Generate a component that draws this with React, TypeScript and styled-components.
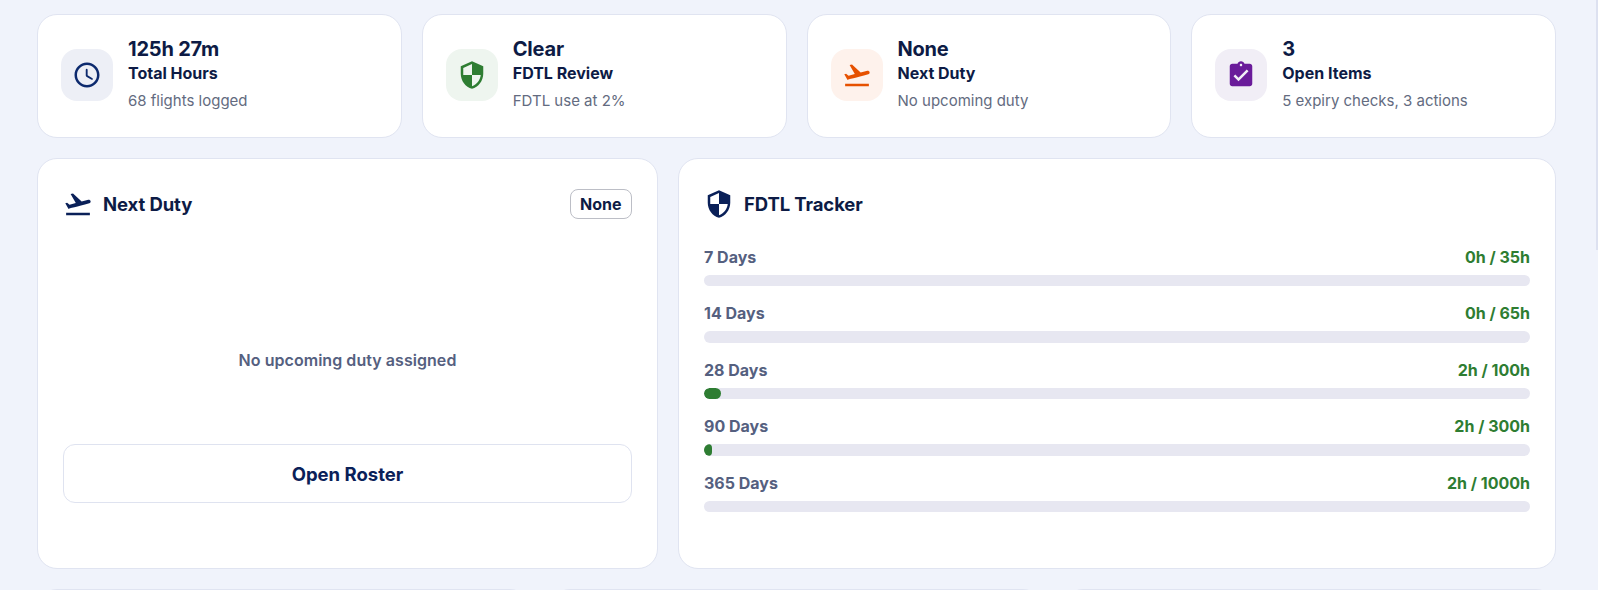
import { FC, ReactNode } from 'react';
import styled, { createGlobalStyle } from 'styled-components';

const GlobalStyle = createGlobalStyle`
  html, body {
    margin: 0;
    height: 590px;
    overflow: hidden;
    background-color: #f0f3fb;
    font-family: Inter, "Liberation Sans", sans-serif;
  }
`;

const Page = styled.div`
  padding: 14px 42px 0 37px;
  display: flex;
  flex-direction: column;
  gap: 20px;
`;

const ScrollThumb = styled.div`
  position: fixed;
  top: 0;
  right: 0;
  width: 2px;
  height: 250px;
  background-color: #dde1f0;
`;

const StatRow = styled.div`
  display: grid;
  grid-template-columns: repeat(4, 1fr);
  gap: 20px;
`;

const Card = styled.div`
  background-color: #fff;
  border: 1px solid #e0e4f1;
  border-radius: 20px;
  box-sizing: border-box;
`;

const StatCard = styled(Card)`
  height: 124px;
  padding: 0 23px 2px;
  display: flex;
  align-items: center;
  gap: 15px;
`;

const IconBox = styled.div<{ $bg: string; $color: string }>`
  width: 52px;
  height: 52px;
  border-radius: 16px;
  flex-shrink: 0;
  display: flex;
  align-items: center;
  justify-content: center;
  background-color: ${(p) => p.$bg};
  color: ${(p) => p.$color};
`;

const StatText = styled.div`
  margin-bottom: 3px;
  display: flex;
  flex-direction: column;
`;

const StatValue = styled.div`
  font-size: 20px;
  line-height: 26px;
  font-weight: 700;
  color: #0d1b45;
  letter-spacing: -0.2px;
`;

const StatTitle = styled.div`
  font-size: 16px;
  line-height: 22px;
  font-weight: 700;
  color: #0d1b45;
`;

const StatSub = styled.div`
  margin-top: 7px;
  font-size: 15px;
  line-height: 20px;
  color: #636b80;
`;

const MainRow = styled.div`
  display: grid;
  grid-template-columns: 621px 1fr;
  gap: 20px;
`;

const Panel = styled(Card)`
  height: 411px;
  padding: 30px 25px 0;
  display: flex;
  flex-direction: column;
`;

const PanelHeader = styled.div`
  height: 30px;
  display: flex;
  align-items: center;
  justify-content: space-between;
`;

const PanelTitle = styled.div`
  display: flex;
  align-items: center;
  gap: 10px;
  font-size: 18.5px;
  font-weight: 700;
  color: #0d1b45;
  letter-spacing: -0.1px;
  svg {
    color: #0a2058;
  }
`;

const Badge = styled.div`
  height: 30px;
  box-sizing: border-box;
  padding: 0 9.5px;
  display: flex;
  align-items: center;
  border: 1px solid #bcbec6;
  border-radius: 8px;
  font-size: 16px;
  font-weight: 700;
  color: #0d1b45;
`;

const EmptyMessage = styled.div`
  flex: 1;
  padding-top: 57px;
  display: flex;
  align-items: center;
  justify-content: center;
  font-size: 16px;
  font-weight: 600;
  color: #55607f;
  letter-spacing: 0.05px;
`;

const RosterButton = styled.button`
  height: 59px;
  margin-bottom: 65px;
  padding: 1px 0 0;
  background-color: #fff;
  border: 1px solid #dfe3f0;
  border-radius: 12px;
  font-family: inherit;
  font-size: 18.5px;
  font-weight: 700;
  color: #0a2058;
`;

const TrackerList = styled.div`
  margin-top: 24px;
  display: flex;
  flex-direction: column;
  gap: 13.5px;
`;

const TrackerItem = styled.div`
  display: flex;
  flex-direction: column;
  gap: 4.5px;
`;

const TrackerLabels = styled.div`
  height: 27px;
  display: flex;
  align-items: center;
  justify-content: space-between;
  font-size: 16px;
  font-weight: 700;
`;

const TrackerName = styled.span`
  color: #55607f;
`;

const TrackerValue = styled.span`
  color: #2e7d32;
`;

const Track = styled.div`
  height: 11.5px;
  border-radius: 6px;
  background-color: #e7e7f1;
  overflow: hidden;
`;

const Fill = styled.div`
  height: 100%;
  border-radius: 6px;
  background-color: #2e7d32;
`;

const BottomRow = styled.div`
  display: grid;
  grid-template-columns: repeat(3, 1fr);
  gap: 20px;
`;

const BottomCard = styled(Card)`
  height: 200px;
`;

const Icon: FC<{ d: string; size?: number }> = ({ d, size = 30 }) => (
  <svg width={size} height={size} viewBox="0 0 24 24" fill="currentColor">
    <path d={d} />
  </svg>
);

const CLOCK =
  'M11.99 2C6.47 2 2 6.48 2 12s4.47 10 9.99 10C17.52 22 22 17.52 22 12S17.52 2 11.99 2zM12 20c-4.42 0-8-3.58-8-8s3.58-8 8-8 8 3.58 8 8-3.58 8-8 8zm-.22-13h-.06c-.4 0-.72.32-.72.72v4.72c0 .35.18.68.49.86l4.15 2.49c.34.2.78.1.98-.24.21-.34.1-.79-.25-.99l-3.87-2.3V7.72c0-.4-.32-.72-.72-.72z';
const SHIELD =
  'M12 1 3 5v6c0 5.55 3.84 10.74 9 12 5.16-1.26 9-6.45 9-12V5l-9-4zm0 10.99h7c-.53 4.12-3.28 7.79-7 8.94V12H5V6.3l7-3.11v8.8z';
const TAKEOFF =
  'M2.5 19h19v2h-19v-2zm19.57-9.36c-.21-.8-1.04-1.28-1.84-1.06L14.92 10l-6.9-6.43-1.93.51 4.14 7.17-4.97 1.33-1.97-1.54-1.45.39 2.59 4.49s7.12-1.9 16.57-4.43c.81-.23 1.28-1.05 1.07-1.85z';
const CLIPBOARD =
  'M19 3h-4.18C14.4 1.84 13.3 1 12 1c-1.3 0-2.4.84-2.82 2H5c-1.1 0-2 .9-2 2v14c0 1.1.9 2 2 2h14c1.1 0 2-.9 2-2V5c0-1.1-.9-2-2-2zm-7 0c.55 0 1 .45 1 1s-.45 1-1 1-1-.45-1-1 .45-1 1-1zm-2 14-4-4 1.41-1.41L10 14.17l6.59-6.59L18 9l-8 8z';

const stats: { icon: string; bg: string; color: string; value: string; title: string; sub: string }[] = [
  { icon: CLOCK, bg: '#edeff6', color: '#0d2a6e', value: '125h 27m', title: 'Total Hours', sub: '68 flights logged' },
  { icon: SHIELD, bg: '#eef5ef', color: '#2e7d32', value: 'Clear', title: 'FDTL Review', sub: 'FDTL use at 2%' },
  { icon: TAKEOFF, bg: '#fef2ec', color: '#e65100', value: 'None', title: 'Next Duty', sub: 'No upcoming duty' },
  { icon: CLIPBOARD, bg: '#f1eef6', color: '#6a1b9a', value: '3', title: 'Open Items', sub: '5 expiry checks, 3 actions' },
];

const limits = [
  { name: '7 Days', value: '0h / 35h', pct: 0 },
  { name: '14 Days', value: '0h / 65h', pct: 0 },
  { name: '28 Days', value: '2h / 100h', pct: 2 },
  { name: '90 Days', value: '2h / 300h', pct: 1 },
  { name: '365 Days', value: '2h / 1000h', pct: 0 },
];

const Title: FC<{ icon: string; children: ReactNode }> = ({ icon, children }) => (
  <PanelTitle>
    <Icon d={icon} />
    {children}
  </PanelTitle>
);

export default function App() {
  return (
    <Page>
      <GlobalStyle />
      <ScrollThumb />
      <StatRow>
        {stats.map((s) => (
          <StatCard key={s.title}>
            <IconBox $bg={s.bg} $color={s.color}>
              <Icon d={s.icon} />
            </IconBox>
            <StatText>
              <StatValue>{s.value}</StatValue>
              <StatTitle>{s.title}</StatTitle>
              <StatSub>{s.sub}</StatSub>
            </StatText>
          </StatCard>
        ))}
      </StatRow>
      <MainRow>
        <Panel>
          <PanelHeader>
            <Title icon={TAKEOFF}>Next Duty</Title>
            <Badge>None</Badge>
          </PanelHeader>
          <EmptyMessage>No upcoming duty assigned</EmptyMessage>
          <RosterButton>Open Roster</RosterButton>
        </Panel>
        <Panel>
          <PanelHeader>
            <Title icon={SHIELD}>FDTL Tracker</Title>
          </PanelHeader>
          <TrackerList>
            {limits.map((l) => (
              <TrackerItem key={l.name}>
                <TrackerLabels>
                  <TrackerName>{l.name}</TrackerName>
                  <TrackerValue>{l.value}</TrackerValue>
                </TrackerLabels>
                <Track>
                  <Fill style={{ width: `${l.pct}%` }} />
                </Track>
              </TrackerItem>
            ))}
          </TrackerList>
        </Panel>
      </MainRow>
      <BottomRow>
        <BottomCard />
        <BottomCard />
        <BottomCard />
      </BottomRow>
    </Page>
  );
}
